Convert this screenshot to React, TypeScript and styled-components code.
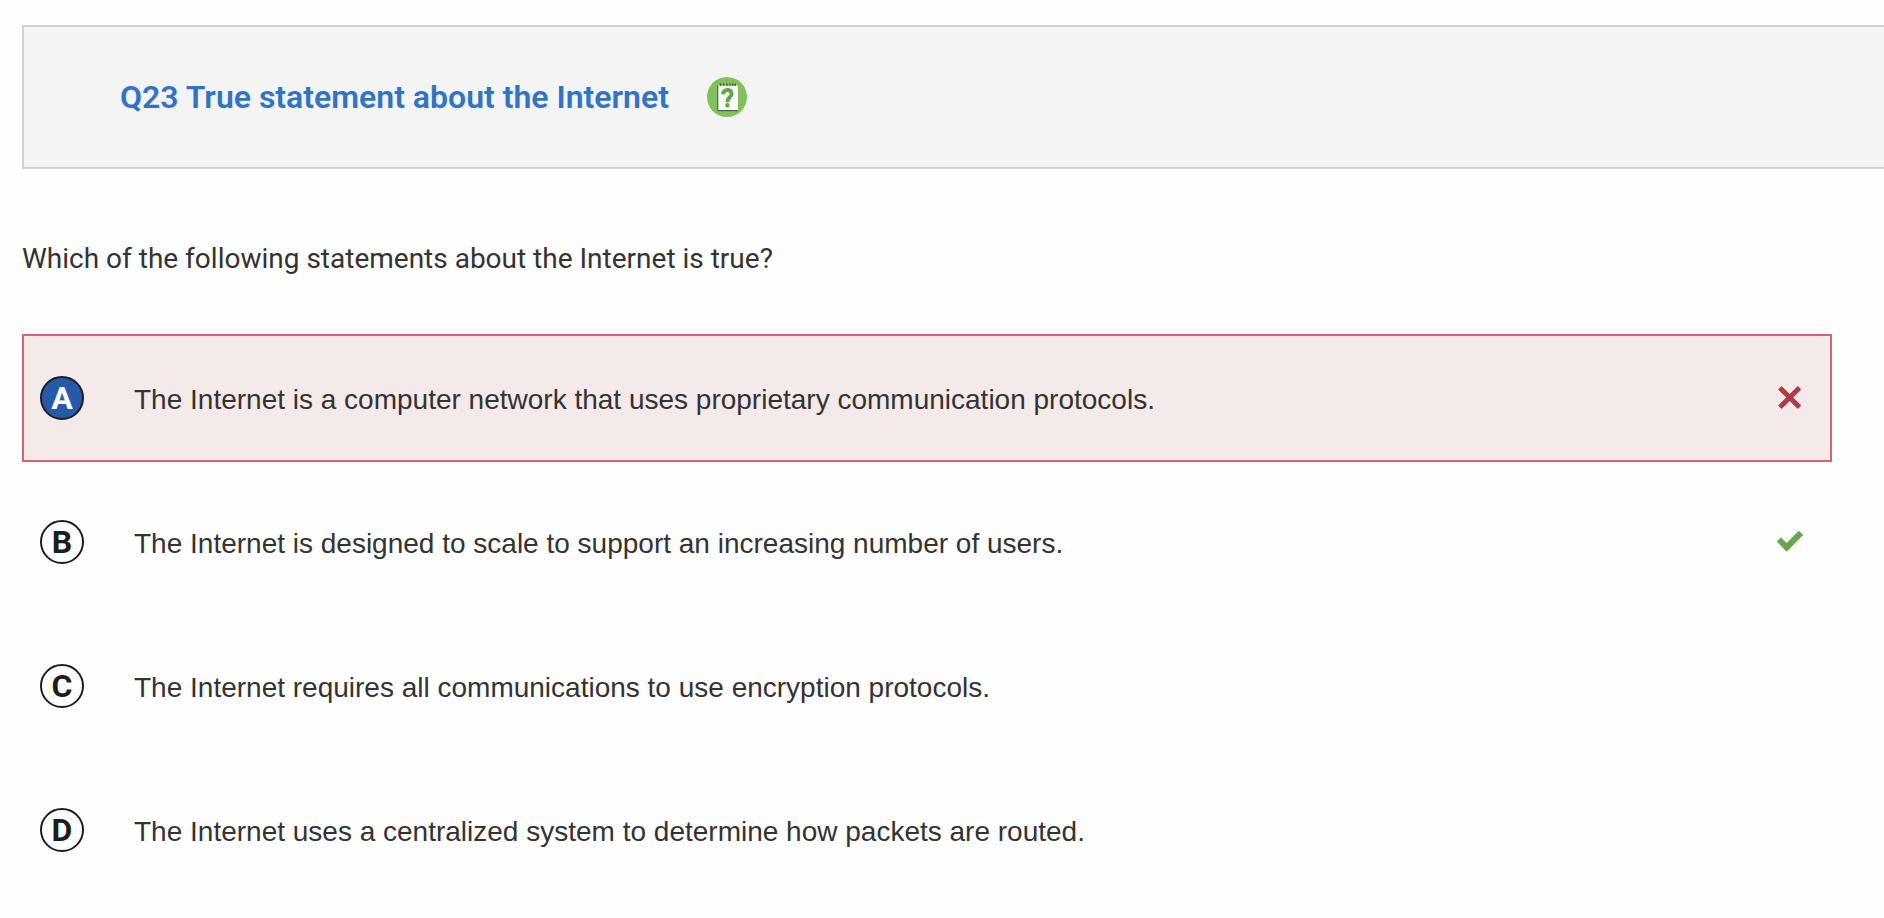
import React, { useState } from "react";
import styled, { createGlobalStyle } from "styled-components";

const GlobalStyle = createGlobalStyle`
  *, *::before, *::after { box-sizing: border-box; }
  body {
    margin: 0;
    background: #fefefe;
    color: #333333;
    font-family: Roboto, "Liberation Sans", sans-serif;
  }
`;

const Page = styled.main`
  padding: 25px 0 24px 22px;
`;

const Header = styled.header`
  display: flex;
  align-items: center;
  gap: 38px;
  min-height: 144px;
  padding: 0 96px;
  background: #f4f4f4;
  border: 2px solid #d1d2d6;
  border-right: 0;
`;

const Title = styled.h1`
  margin: 0;
  color: #3173c4;
  font-size: 32px;
  font-weight: 600;
  line-height: 40px;
`;

const HelpButton = styled.button`
  display: flex;
  width: 40px;
  height: 40px;
  padding: 0;
  border: 0;
  border-radius: 50%;
  background: #82c15c;
  cursor: pointer;
`;

const Question = styled.fieldset`
  min-width: 0;
  margin: 0;
  padding: 0 52px 0 0;
  border: 0;
`;

const Prompt = styled.legend`
  padding: 70px 0 55px;
  font-size: 28px;
  line-height: 40px;
`;

const Options = styled.div`
  display: flex;
  flex-direction: column;
  gap: 16px;
`;

const Option = styled.label<{ $wrong: boolean }>`
  display: flex;
  align-items: center;
  min-height: 128px;
  padding: 0 26px 0 16px;
  border: 2px solid ${(p) => (p.$wrong ? "#d8636f" : "transparent")};
  background: ${(p) => (p.$wrong ? "#f4eae9" : "transparent")};
  cursor: pointer;
`;

const Radio = styled.input`
  position: absolute;
  opacity: 0;
  margin: 0;
`;

const Letter = styled.span<{ $selected: boolean }>`
  display: flex;
  flex: none;
  align-items: center;
  justify-content: center;
  width: 44px;
  height: 44px;
  margin-right: 50px;
  border: 2px solid #1d1d1d;
  border-radius: 50%;
  background: ${(p) => (p.$selected ? "#255aab" : "#ffffff")};
  color: ${(p) => (p.$selected ? "#ffffff" : "#1d1d1d")};
  font-size: 32px;
  font-weight: 700;
  line-height: 40px;
`;

const OptionText = styled.span`
  flex: 1;
  padding-top: 4px;
  font-family: "Liberation Sans", Arial, sans-serif;
  font-size: 28px;
  line-height: 40px;
`;

const Mark = styled.svg`
  flex: none;
  width: 28px;
  height: 28px;
`;

const Cross = () => (
  <Mark viewBox="0 0 28 28" role="img" aria-label="Incorrect">
    <path
      d="M5.6 2.9 L13.7 11 L21.8 2.9 L24.3 5.4 L16.2 13.5 L24.3 21.6 L21.8 24.1 L13.7 16 L5.6 24.1 L3.1 21.6 L11.2 13.5 L3.1 5.4 Z"
      fill="#b03a48"
      stroke="#b03a48"
      strokeWidth="1.4"
      strokeLinejoin="round"
    />
  </Mark>
);

const Check = () => (
  <Mark viewBox="0 0 28 28" role="img" aria-label="Correct">
    <path
      d="M1 13.4 L4.9 9.7 L10.7 15.3 L22.9 3 L26.8 7 L10.7 23.4 Z"
      fill="#67a64f"
      stroke="#67a64f"
      strokeWidth="0.6"
      strokeLinejoin="round"
    />
  </Mark>
);

const HelpIcon = () => (
  <svg width="40" height="40" viewBox="0 0 40 40" aria-hidden="true">
    <path d="M10.2 8.4 H30.6 V34.2 H10.2 Z" fill="#45643a" />
    <path d="M11.3 8.4 H31 V33 H11.3 Z" fill="#ffffff" />
    <path d="M13.2 6.4 L14 9 M16.4 6.4 L17 9 M19.7 6.4 L20.2 9 M23 6.4 V9 M25.7 6.4 V9 M28.2 6.4 V9" stroke="#2f4a26" strokeWidth="1.1" />
    <path d="M16.2 17.4 C16 11.4 24.8 11.6 24.6 16.8 C24.4 20.2 20.4 20.4 20.4 25.2" fill="none" stroke="#62a44a" strokeWidth="4" />
    <circle cx="20.4" cy="28.2" r="2.2" fill="#62a44a" />
  </svg>
);

const options = [
  { id: "A", text: "The Internet is a computer network that uses proprietary communication protocols." },
  { id: "B", text: "The Internet is designed to scale to support an increasing number of users." },
  { id: "C", text: "The Internet requires all communications to use encryption protocols." },
  { id: "D", text: "The Internet uses a centralized system to determine how packets are routed." },
];

const correct = "B";

export default function App() {
  const [selected, setSelected] = useState("A");
  return (
    <>
      <GlobalStyle />
      <Page>
        <Header>
          <Title>Q23 True statement about the Internet</Title>
          <HelpButton type="button" aria-label="Question help">
            <HelpIcon />
          </HelpButton>
        </Header>
        <Question>
          <Prompt>Which of the following statements about the Internet is true?</Prompt>
          <Options>
            {options.map(({ id, text }) => {
              const isSelected = selected === id;
              const isWrong = isSelected && id !== correct;
              return (
                <Option key={id} $wrong={isWrong}>
                  <Radio
                    type="radio"
                    name="answer"
                    value={id}
                    checked={isSelected}
                    onChange={() => setSelected(id)}
                  />
                  <Letter $selected={isSelected}>{id}</Letter>
                  <OptionText>{text}</OptionText>
                  {isWrong && <Cross />}
                  {id === correct && <Check />}
                </Option>
              );
            })}
          </Options>
        </Question>
      </Page>
    </>
  );
}
